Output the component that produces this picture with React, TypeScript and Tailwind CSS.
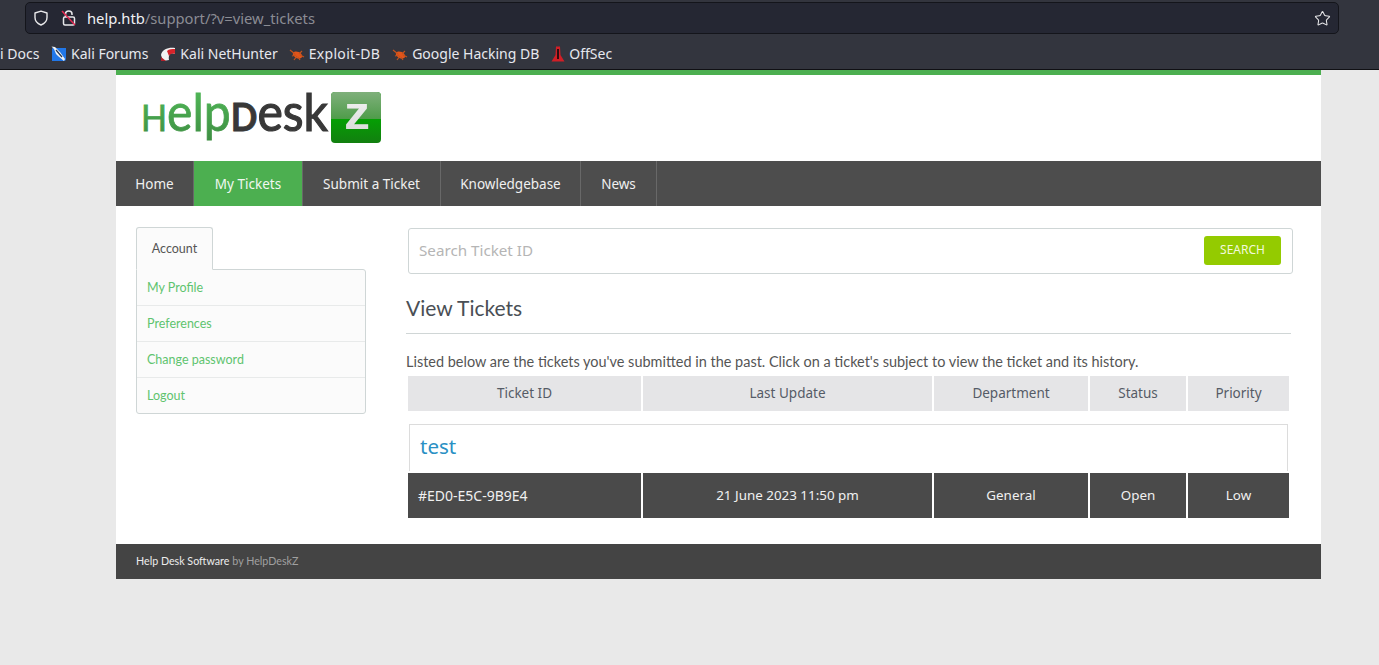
import React from "react";
import { Star } from "lucide-react";

const chrome = "font-['Noto_Sans',sans-serif]";

function ShieldIcon() {
  return (
    <svg width="16" height="16" viewBox="0 0 16 16" fill="none" stroke="#e8e8ea" strokeWidth="1.4">
      <path d="M8 1.2 L14 3 V7.5 C14 11 11.5 13.6 8 15 C4.500 13.600 2 11 2 7.500 V3 Z" strokeLinejoin="round" />
    </svg>
  );
}

function LockSlashIcon() {
  return (
    <svg width="16" height="18" viewBox="0 0 16 18" fill="none">
      <path d="M4.500 8 V5 C4.500 1 11 1 11 5 V6" stroke="#e8e8ea" strokeWidth="1.500" />
      <rect x="2.500" y="8" width="11" height="8" rx="1.500" stroke="#e8e8ea" strokeWidth="1.500" />
      <path d="M1 2 L14 16" stroke="#e22850" strokeWidth="1.500" />
    </svg>
  );
}

function ForumIcon() {
  return (
    <svg width="16" height="16" viewBox="0 0 16 16" className="shrink-0">
      <path d="M2 2 H15 V13 Q15 15 13 15 H1 V3 Q1 2 2 2 Z" fill="#2177e8" />
      <path d="M0.500 0.500 L4 1 L9 6 L14 13 L13 15 L7 10 L5 8 L3 3 Z" fill="#eef2f6" />
      <path d="M5 4 L11 11" stroke="#24344e" strokeWidth="1.200" />
    </svg>
  );
}

function NetHunterIcon() {
  return (
    <svg width="16" height="16" viewBox="0 0 16 16" className="shrink-0">
      <path d="M1 9 C2 3 9 1 15 2 L15 8 C11 6 8 8 9 14 L3 15 Z" fill="#f2f2f2" />
      <path d="M7 5 C9 3 12 3 15 3 L15 8 C12 7 10 8 9 10 Z" fill="#d8232a" />
      <path d="M1 11 L6 15 L1 15 Z" fill="#b3202a" />
    </svg>
  );
}

function BugIcon() {
  return (
    <svg width="16" height="16" viewBox="0 0 16 16" className="shrink-0">
      <ellipse cx="8.500" cy="9" rx="5" ry="3.200" fill="#e2541a" transform="rotate(25 8.500 9)" />
      <path d="M1 4 L6 8 M3 10 L7 9 M5 14 L8 10 M13 5 L10 8 M15 11 L11 9 M11 14 L9 11" stroke="#c4521c" strokeWidth="1.200" />
    </svg>
  );
}

function OffSecIcon() {
  return (
    <svg width="14" height="16" viewBox="0 0 14 16" className="shrink-0">
      <path d="M5 0.500 H9 L9.500 9 L13.500 15.500 H0.500 L4.500 9 Z" fill="#d01f26" />
      <path d="M7 3 V13" stroke="#1c0c0e" strokeWidth="1.800" />
    </svg>
  );
}

function Bookmark({ icon, label, className, textClass = "" }: { icon: React.ReactNode; label: string; className: string; textClass?: string }) {
  return (
    <div className={`flex items-center gap-[4px] ${className}`}>
      {icon}
      <span className={`text-[14px] text-[#e6e8ee] whitespace-nowrap ${textClass}`}>{label}</span>
    </div>
  );
}

function BrowserBar() {
  return (
    <div className={`h-[70px] shrink-0 bg-[#33353e] border-b border-[#101014] overflow-hidden ${chrome}`}>
      <div className="h-[35px] pl-[25px] pr-[40px] pt-[2px]">
        <div className="h-[32px] bg-[#252733] border border-[#14151b] rounded-[5px] flex items-center pl-[7px] pr-[7px]">
          <ShieldIcon />
          <div className="ml-[12px]"><LockSlashIcon /></div>
          <div className="ml-[10px] text-[14.750px] flex-1 whitespace-nowrap">
            <span className="text-[#f0f1f4]">help.htb</span>
            <span className="text-[#8b8c93]">/support/?v=view_tickets</span>
          </div>
          <Star size={17} strokeWidth={1.500} className="text-[#e6e6e8]" />
        </div>
      </div>
      <div className="h-[34px] flex items-center pt-[3px]">
        <span className="text-[14px] text-[#e6e8ee] whitespace-nowrap w-[38px]">i Docs</span>
        <Bookmark className="ml-[13px]" icon={<ForumIcon />} label="Kali Forums" />
        <Bookmark className="ml-[12px]" icon={<NetHunterIcon />} label="Kali NetHunter" />
        <Bookmark className="ml-[11px]" icon={<BugIcon />} label="Exploit-DB" textClass="tracking-[0.300px]" />
        <Bookmark className="ml-[12px]" icon={<BugIcon />} label="Google Hacking DB" />
        <Bookmark className="ml-[12px]" icon={<OffSecIcon />} label="OffSec" />
      </div>
    </div>
  );
}

function Logo() {
  const g = "url(#helpGreen)";
  const d = "#383838";
  return (
    <svg width="245" height="60" viewBox="0 0 245 60" className="block ml-[24px] mt-[13px]">
      <defs>
        <linearGradient id="helpGreen" gradientUnits="userSpaceOnUse" x1="0" y1="4" x2="0" y2="56">
          <stop offset="0" stopColor="#4fb556" />
          <stop offset="1" stopColor="#3d8c41" />
        </linearGradient>
        <linearGradient id="zTop" x1="0" y1="0" x2="0" y2="1">
          <stop offset="0" stopColor="#7fb07b" />
          <stop offset="1" stopColor="#4f9c4a" />
        </linearGradient>
        <linearGradient id="zBottom" x1="0" y1="0" x2="0" y2="1">
          <stop offset="0" stopColor="#0a8f07" />
          <stop offset="0.500" stopColor="#04a103" />
          <stop offset="1" stopColor="#127f10" />
        </linearGradient>
        <linearGradient id="zLetter" x1="0" y1="0" x2="0" y2="1">
          <stop offset="0" stopColor="#f8f8f8" />
          <stop offset="1" stopColor="#d6d6d6" />
        </linearGradient>
      </defs>
      <text x="1" y="43" textLength="187" lengthAdjust="spacingAndGlyphs" fontFamily="Lato, sans-serif" fontSize="52">
        <tspan fontSize="37" fill={g} stroke={g} strokeWidth="0.800">H</tspan>
        <tspan fill={g} stroke={g} strokeWidth="0.800">elp</tspan>
        <tspan fontSize="38" fontWeight={700} fill={d} stroke={d} strokeWidth="0.800">D</tspan>
        <tspan fill={d} stroke={d} strokeWidth="1.200">esk</tspan>
      </text>
      <rect x="191" y="4" width="50" height="51" rx="4" fill="url(#zBottom)" />
      <path d="M191 31 V8 Q191 4 195 4 H237 Q241 4 241 8 V31 Z" fill="url(#zTop)" />
      <text x="204" y="41" textLength="26" lengthAdjust="spacingAndGlyphs" fontSize="46" fontWeight={700} fontFamily="Liberation Sans, sans-serif" fill="url(#zLetter)">
        z
      </text>
    </svg>
  );
}

const navItems = [
  { label: "Home", w: "w-[78px]", active: false },
  { label: "My Tickets", w: "w-[109px]", active: true },
  { label: "Submit a Ticket", w: "w-[138px]", active: false },
  { label: "Knowledgebase", w: "w-[140px]", active: false },
  { label: "News", w: "w-[76px]", active: false },
];

function Nav() {
  return (
    <div className="h-[45px] bg-[#4d4d4d] flex">
      {navItems.map((n) => (
        <div
          key={n.label}
          className={`${n.w} h-full pt-[1px] flex items-center justify-center text-[13.500px] border-r border-[#686868] ${n.active ? "bg-[#4caf50] text-[#f1f8f1]" : "text-[#f0f0f0]"}`}
        >
          {n.label}
        </div>
      ))}
    </div>
  );
}

function Sidebar() {
  const links = ["My Profile", "Preferences", "Change password", "Logout"];
  return (
    <div className="w-[230px] ml-[20px] mt-[21px] shrink-0 font-['Lato',sans-serif]">
      <div className="w-[77px] h-[43px] -mb-px pt-[1px] relative z-10 bg-[#fbfbfb] border border-[#cfd6d6] border-b-[#fbfbfb] rounded-t-[3px] flex items-center justify-center text-[12.500px] text-[#555]">
        Account
      </div>
      <div className="bg-[#fbfbfb] border border-[#cfd6d6] rounded-b-[3px] rounded-tr-[3px] h-[145px]">
        {links.map((l, i) => (
          <div key={l} className={`h-[36px] flex items-center pl-[10px] text-[12.500px] text-[#5fc46f] ${i < 3 ? "border-b border-[#e8eaea] pt-[1px]" : ""}`}>
            {l}
          </div>
        ))}
      </div>
    </div>
  );
}

const cols = "grid grid-cols-[233px_289px_154px_96px_101px] gap-x-[2px]";

function Main() {
  const head = ["Ticket ID", "Last Update", "Department", "Status", "Priority"];
  const row = ["21 June 2023 11:50 pm", "General", "Open", "Low"];
  return (
    <div className="ml-[40px] w-[887px] pt-[22px]">
      <div className="ml-[2px] w-[885px] h-[46px] border border-[#cfd6d6] rounded-[3px] flex items-center justify-between pl-[10px] pr-[11px]">
        <span className="text-[15.200px] text-[#b5b5b5] -mt-[1px]">Search Ticket ID</span>
        <div className="w-[77px] h-[29px] -mt-[2px] rounded-[3px] bg-[#94cb00] text-[#f2f9dc] text-[12px] flex items-center justify-center">SEARCH</div>
      </div>
      <div className="mt-[19px] w-[885px] h-[41px] border-b border-[#d0d6d6] font-['Lato',sans-serif] text-[21px] leading-[30px] text-[#4a4f55]">View Tickets</div>
      <p className="mt-[18px] h-[24px] font-['Lato',sans-serif] text-[14.470px] leading-[20px] text-[#555] whitespace-nowrap">
        Listed below are the tickets you've submitted in the past. Click on a ticket's subject to view the ticket and its history.
      </p>
      <div className={`ml-[2px] ${cols} h-[35px]`}>
        {head.map((h) => (
          <div key={h} className="bg-[#e5e5e7] flex items-center justify-center text-[13.500px] text-[#555b66]">{h}</div>
        ))}
      </div>
      <div className="ml-[3px] mt-[13px] w-[879px] h-[47px] border-x border-t border-[#dcdcdc] pl-[10px] text-[20.500px] leading-[43px] text-[#2a90c4]">test</div>
      <div className={`ml-[2px] mt-[2px] ${cols} h-[45px]`}>
        <div className="bg-[#4a4a4a] flex items-center pl-[10px] text-[14px] text-[#f0f0f0]">#ED0-E5C-9B9E4</div>
        {row.map((c) => (
          <div key={c} className="bg-[#4a4a4a] flex items-center justify-center text-[13.400px] text-[#f0f0f0]">{c}</div>
        ))}
      </div>
    </div>
  );
}

export default function App() {
  return (
    <div className="h-screen overflow-hidden bg-[#e9e9e9] flex flex-col">
      <BrowserBar />
      <div className="ml-[116px] w-[1205px] bg-white border-t-[5px] border-[#4caf50] font-['Noto_Sans',sans-serif]">
        <div className="h-[86px] overflow-hidden"><Logo /></div>
        <Nav />
        <div className="flex h-[338px]">
          <Sidebar />
          <Main />
        </div>
        <div className="h-[35px] bg-[#444] pl-[20px] flex items-center font-['Lato',sans-serif] text-[10.700px]">
          <span className="text-[#ececec]">Help Desk Software</span>
          <span className="text-[#a0a0a0] ml-[3px]">by HelpDeskZ</span>
        </div>
      </div>
    </div>
  );
}
